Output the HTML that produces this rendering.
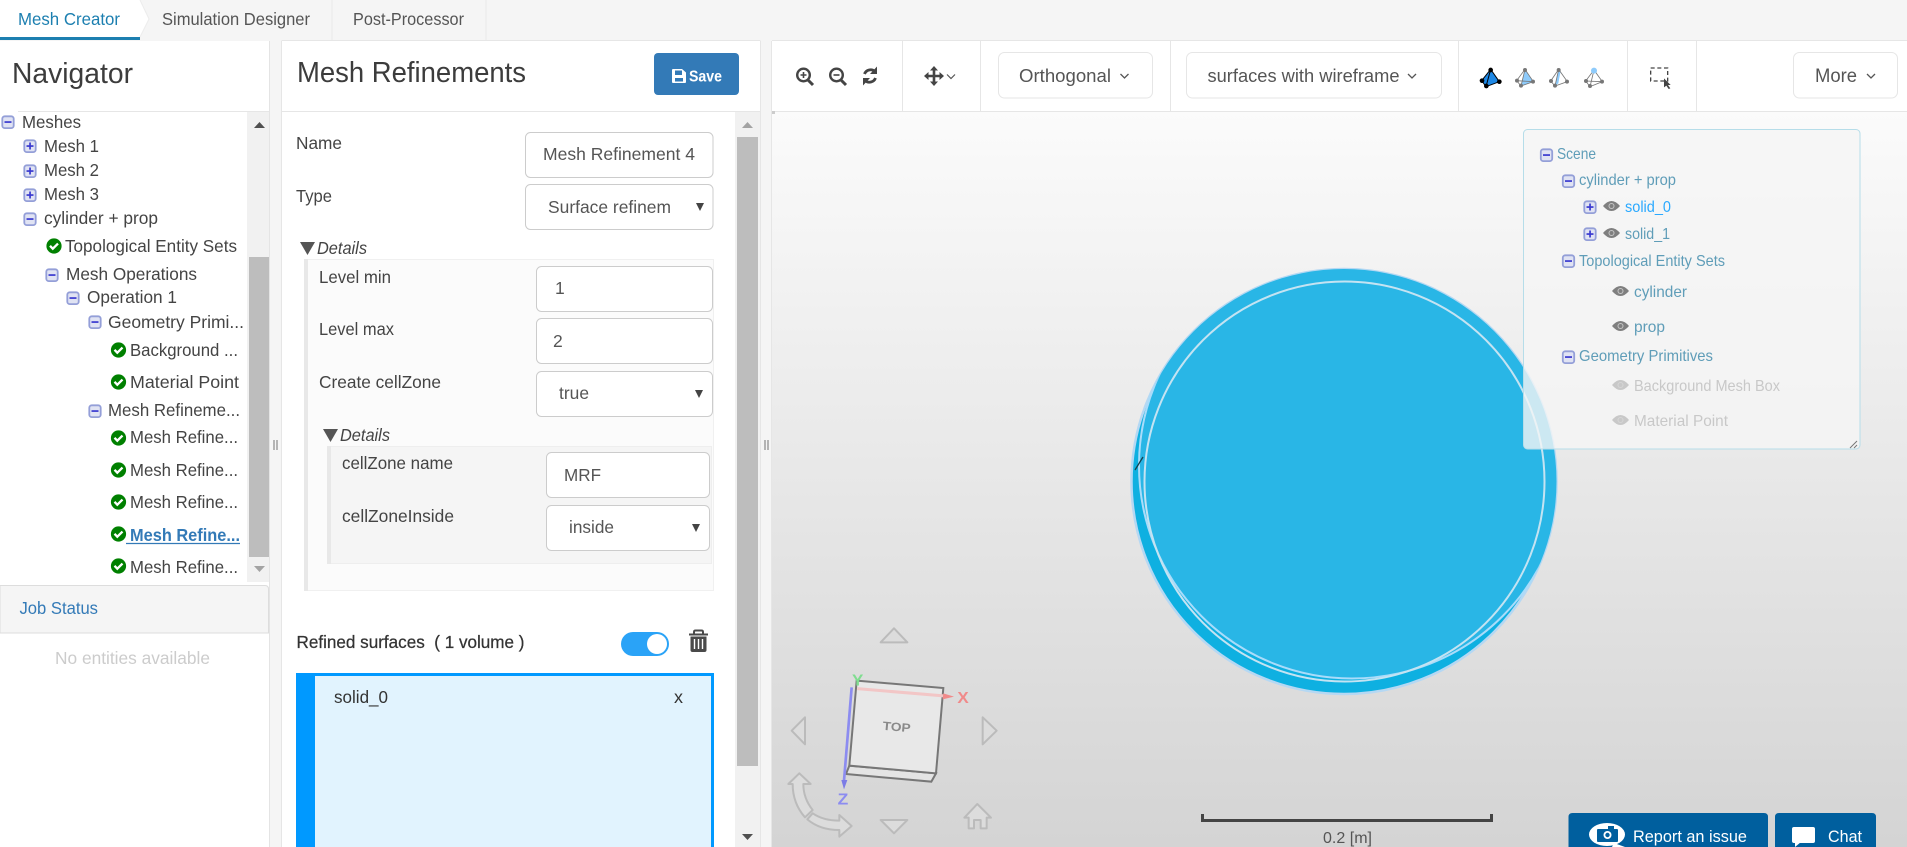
<!DOCTYPE html>
<html><head><meta charset="utf-8"><title>Mesh Creator</title>
<style>
html,body{margin:0;padding:0;width:1907px;height:847px;overflow:hidden;background:#f5f5f5}
svg{display:block;position:absolute;left:0;top:0}
text{font-family:"Liberation Sans",sans-serif;fill:#444;font-size:17.5px;white-space:pre}
.lb{font-size:17.5px;fill:#444}
.inp{font-size:17.5px;fill:#555}
.h{font-size:29px;fill:#3c3c3c}
.tb{font-size:18.5px;fill:#555}
.sc{font-size:16px;fill:#5f9db8}
.box{fill:#fff;stroke:#ccc;stroke-width:1}
.btn{fill:#fff;stroke:#e6e6e6;stroke-width:1}
.nav{fill:#dcdcdc;stroke:#bbb;stroke-width:6;stroke-linejoin:round}
</style></head><body>
<svg width="1907" height="847" viewBox="0 0 1907 847" xmlns="http://www.w3.org/2000/svg">
<defs>
<linearGradient id="vg" x1="0" y1="0" x2="0" y2="1"><stop offset="0" stop-color="#fbfbfb"/><stop offset="1" stop-color="#d4d4d4"/></linearGradient>
<clipPath id="oc"><circle cx="1344" cy="481.500" r="212.500"/></clipPath>
<g id="mi"><rect x="-5.7" y="-5.7" width="11.4" height="11.8" rx="2.5" fill="#e0e3f3" stroke="#949fd8" stroke-width="1.800"/><rect x="-3.5" y="-.8" width="7" height="1.7" fill="#3a3ad0"/></g>
<g id="pl"><rect x="-5.7" y="-5.7" width="11.4" height="11.8" rx="2.5" fill="#e0e3f3" stroke="#949fd8" stroke-width="1.800"/><rect x="-3.5" y="-.8" width="7" height="1.7" fill="#3a3ad0"/><rect x="-.8" y="-3.5" width="1.7" height="7" fill="#3a3ad0"/></g>
<g id="ck"><circle r="7.6" fill="#008000"/><path d="M-4-.2L-1.2 2.7L4-2.4" fill="none" stroke="#fff" stroke-width="2.3"/></g>
<g id="ey"><path d="M-8.500 0Q0-10 8.500 0Q0 10-8.500 0Z" fill="currentColor"/><circle r="3" fill="#d8d8d8" opacity=".8"/><circle r="2" fill="currentColor"/></g>
</defs>

<!-- tabs -->
<rect width="1907" height="847" fill="#f5f5f5"/>
<rect x="0" y="0" width="140" height="37" fill="#fff"/>
<rect x="0" y="37" width="140" height="3" fill="#1c7fb0"/>
<path d="M140 0L149 19L140 37" fill="#fff" stroke="#ececec"/>
<path d="M332 0V40M486 0V40" stroke="#e9e9e9" fill="none"/>
<text x="18" y="25" textLength="102" lengthAdjust="spacingAndGlyphs" style="fill:#1c7fb0">Mesh Creator</text>
<text x="162" y="25" textLength="148" lengthAdjust="spacingAndGlyphs" style="fill:#555">Simulation Designer</text>
<text x="353" y="25" textLength="111" lengthAdjust="spacingAndGlyphs" style="fill:#555">Post-Processor</text>

<!-- navigator -->
<rect x="0" y="41" width="269" height="806" fill="#fff"/>
<path d="M269.5 41V847" stroke="#e4e4e4"/>
<path d="M18 111.5H269" stroke="#e6e6e6"/>
<text x="12" y="83" class="h" textLength="121" lengthAdjust="spacingAndGlyphs">Navigator</text>
<rect x="247" y="112" width="22" height="470" fill="#f1f1f1"/>
<rect x="249" y="257" width="20" height="300" fill="#bdbdbd"/>
<path d="M254 128L259.500 122L265 128Z" fill="#505050"/>
<path d="M254 566H265L259.500 572Z" fill="#a3a3a3"/>

<use href="#mi" x="8" y="122"/><text x="22" y="128" textLength="59" lengthAdjust="spacingAndGlyphs">Meshes</text>
<use href="#pl" x="30" y="146"/><text x="44" y="152" textLength="55" lengthAdjust="spacingAndGlyphs">Mesh 1</text>
<use href="#pl" x="30" y="171"/><text x="44" y="176" textLength="55" lengthAdjust="spacingAndGlyphs">Mesh 2</text>
<use href="#pl" x="30" y="195"/><text x="44" y="200" textLength="55" lengthAdjust="spacingAndGlyphs">Mesh 3</text>
<use href="#mi" x="30" y="219"/><text x="44" y="224" textLength="114" lengthAdjust="spacingAndGlyphs">cylinder + prop</text>
<use href="#ck" x="54" y="246"/><text x="65" y="252" textLength="172" lengthAdjust="spacingAndGlyphs">Topological Entity Sets</text>
<use href="#mi" x="52" y="275"/><text x="66" y="280" textLength="131" lengthAdjust="spacingAndGlyphs">Mesh Operations</text>
<use href="#mi" x="73" y="298"/><text x="87" y="303" textLength="90" lengthAdjust="spacingAndGlyphs">Operation 1</text>
<use href="#mi" x="95" y="322"/><text x="108" y="328" textLength="136" lengthAdjust="spacingAndGlyphs">Geometry Primi...</text>
<use href="#ck" x="118.500" y="350"/><text x="130" y="356" textLength="108" lengthAdjust="spacingAndGlyphs">Background ...</text>
<use href="#ck" x="118.500" y="382"/><text x="130" y="388" textLength="109" lengthAdjust="spacingAndGlyphs">Material Point</text>
<use href="#mi" x="95" y="411"/><text x="108" y="416" textLength="132" lengthAdjust="spacingAndGlyphs">Mesh Refineme...</text>
<use href="#ck" x="118.500" y="438"/><text x="130" y="443" textLength="108" lengthAdjust="spacingAndGlyphs">Mesh Refine...</text>
<use href="#ck" x="118.500" y="470"/><text x="130" y="476" textLength="108" lengthAdjust="spacingAndGlyphs">Mesh Refine...</text>
<use href="#ck" x="118.500" y="502"/><text x="130" y="508" textLength="108" lengthAdjust="spacingAndGlyphs">Mesh Refine...</text>
<use href="#ck" x="118.500" y="534"/><text x="130" y="541" textLength="110" lengthAdjust="spacingAndGlyphs" style="fill:#337ab7;font-weight:bold">Mesh Refine...</text>
<path d="M126 543.500H240" stroke="#337ab7" stroke-width="1.200"/>
<use href="#ck" x="118.500" y="566"/><text x="130" y="573" textLength="108" lengthAdjust="spacingAndGlyphs">Mesh Refine...</text>

<!-- job status -->
<path d="M0 585.500H265Q268.500 585.500 268.500 589V633H0Z" fill="#f5f5f5" stroke="#ddd"/>
<text x="19.500" y="614" textLength="78.500" lengthAdjust="spacingAndGlyphs" style="fill:#337ab7">Job Status</text>
<text x="55" y="664" textLength="155" lengthAdjust="spacingAndGlyphs" style="fill:#ccc">No entities available</text>

<!-- gutter handles -->
<path d="M274 440V450M277 440V450" stroke="#888" stroke-width="1.200"/>
<path d="M765 440V450M768 440V450" stroke="#888" stroke-width="1.200"/>

<!-- mesh panel -->
<rect x="282" y="41" width="478" height="806" fill="#fff"/>
<path d="M281.500 41V847M760.500 41V847M281.500 40.500H760.500" stroke="#e6e6e6" fill="none"/>
<path d="M282 111.500H760" stroke="#e6e6e6"/>
<text x="297" y="82" class="h" textLength="229" lengthAdjust="spacingAndGlyphs">Mesh Refinements</text>
<rect x="654" y="53" width="85" height="42" rx="4" fill="#337ab7"/>
<path d="M672 76V70Q672 69 673 69H682L686 72.500V82Q686 83 685 83H673Q672 83 672 82Z M675 70.500V75H682V70.500Z M675 78V81.500H683V78Z" fill="#fff" fill-rule="evenodd"/>
<text x="689" y="81.500" textLength="33" lengthAdjust="spacingAndGlyphs" style="fill:#fff;font-size:16px;font-weight:bold">Save</text>

<rect x="735" y="112" width="25" height="735" fill="#f1f1f1"/>
<rect x="737" y="137" width="21" height="629" fill="#bdbdbd"/>
<path d="M742 128L747.500 122L753 128Z" fill="#a3a3a3"/>
<path d="M742 834H753L747.500 840Z" fill="#505050"/>

<text x="296" y="149" class="lb" textLength="46" lengthAdjust="spacingAndGlyphs">Name</text>
<rect x="525.500" y="132.500" width="187.500" height="45" rx="5" class="box"/>
<text x="543" y="160" class="inp" textLength="152" lengthAdjust="spacingAndGlyphs">Mesh Refinement 4</text>
<text x="296" y="202" class="lb" textLength="36" lengthAdjust="spacingAndGlyphs">Type</text>
<rect x="525.500" y="184.500" width="187.500" height="45" rx="5" class="box"/>
<text x="548" y="213" class="inp" textLength="123" lengthAdjust="spacingAndGlyphs">Surface refinem</text>
<path d="M696 203H704L700 211Z" fill="#444"/>

<path d="M300 242H315L307.500 255Z" fill="#555"/>
<text x="317" y="254" class="lb" font-style="italic" textLength="50" lengthAdjust="spacingAndGlyphs">Details</text>
<rect x="304.500" y="259.500" width="409" height="331" fill="#fbfbfb" stroke="#f0f0f0"/>
<rect x="304" y="259" width="4" height="332" fill="#e8e8e8"/>
<text x="319" y="283" class="lb" textLength="72" lengthAdjust="spacingAndGlyphs">Level min</text>
<rect x="536.500" y="266.500" width="176" height="45" rx="5" class="box"/>
<text x="555" y="294" class="inp">1</text>
<text x="319" y="335" class="lb" textLength="75" lengthAdjust="spacingAndGlyphs">Level max</text>
<rect x="536.500" y="318.500" width="176" height="45" rx="5" class="box"/>
<text x="553" y="347" class="inp">2</text>
<text x="319" y="388" class="lb" textLength="122" lengthAdjust="spacingAndGlyphs">Create cellZone</text>
<rect x="536.500" y="371.500" width="176" height="45" rx="5" class="box"/>
<text x="559" y="399" class="inp" textLength="30" lengthAdjust="spacingAndGlyphs">true</text>
<path d="M695 390H703L699 398Z" fill="#444"/>

<path d="M323 429H338L330.500 442Z" fill="#555"/>
<text x="340" y="441" class="lb" font-style="italic" textLength="50" lengthAdjust="spacingAndGlyphs">Details</text>
<rect x="327.500" y="446.500" width="384" height="117" fill="#f5f5f5" stroke="#eee"/>
<rect x="327" y="446" width="4" height="118" fill="#e8e8e8"/>
<text x="342" y="469" class="lb" textLength="111" lengthAdjust="spacingAndGlyphs">cellZone name</text>
<rect x="546.500" y="452.500" width="163" height="45" rx="5" class="box"/>
<text x="564" y="481" class="inp" textLength="37" lengthAdjust="spacingAndGlyphs">MRF</text>
<text x="342" y="522" class="lb" textLength="112" lengthAdjust="spacingAndGlyphs">cellZoneInside</text>
<rect x="546.500" y="505.500" width="163" height="45" rx="5" class="box"/>
<text x="569" y="533" class="inp" textLength="45" lengthAdjust="spacingAndGlyphs">inside</text>
<path d="M692 524H700L696 532Z" fill="#444"/>

<text x="296.500" y="648" textLength="228" lengthAdjust="spacingAndGlyphs" style="fill:#333;stroke:#333;stroke-width:.25">Refined surfaces  ( 1 volume )</text>
<rect x="621" y="632" width="48" height="24" rx="12" fill="#2aa3f7"/>
<circle cx="657" cy="644" r="10" fill="#fff"/>
<path d="M689 634.500H708M694 634.500V632Q694 630.500 695.500 630.500H701.500Q703 630.500 703 632V634.500" fill="none" stroke="#4a4a4a" stroke-width="2"/>
<path d="M690.500 636.500H706.500V650Q706.500 652 704.500 652H692.500Q690.500 652 690.500 650Z" fill="#4a4a4a"/>
<path d="M694.500 639V649M698.500 639V649M702.500 639V649" stroke="#fff" stroke-width="1.400"/>

<rect x="296" y="673" width="418" height="174" fill="#0099ff"/>
<rect x="315" y="676" width="396" height="171" fill="#e1f3fe"/>
<text x="334" y="703" textLength="54" lengthAdjust="spacingAndGlyphs" style="fill:#333">solid_0</text>
<text x="674" y="703" textLength="9" lengthAdjust="spacingAndGlyphs" style="fill:#333">x</text>

<!-- viewer -->
<rect x="772" y="111" width="1135" height="736" fill="url(#vg)"/>
<rect x="772" y="41" width="1135" height="70" fill="#fff"/>
<path d="M771.500 41V847" stroke="#e6e6e6"/>
<path d="M772 40.500H1907M772 111.500H1907" stroke="#e6e6e6"/>
<path d="M902.500 41V111M980.500 41V111M1170.500 41V111M1458.500 41V111M1627.500 41V111M1696.500 41V111" stroke="#e6e6e6"/>
<rect x="772" y="111" width="3" height="3" fill="#ccc"/>

<!-- zoom icons -->
<g fill="none" stroke="#444" stroke-width="2.400">
<circle cx="803.500" cy="75" r="6.300"/><path d="M808 80L813 85" stroke-width="3"/><path d="M800.500 75H806.500M803.500 72V78" stroke-width="1.600"/>
<circle cx="836.500" cy="75" r="6.300"/><path d="M841 80L846 85" stroke-width="3"/><path d="M833.500 75H839.500" stroke-width="1.600"/>
<path d="M864.500 74A6.500 6.500 0 0 1 875 71.500" stroke-width="2.800"/><path d="M875.500 78A6.500 6.500 0 0 1 865 80.500" stroke-width="2.800"/>
</g>
<path d="M877 66.500V74H870ZM863 85.500V78H870Z" fill="#444"/>
<!-- move -->
<path d="M934 66L938 70.500H935.300V74.700H939.500V72L944 76L939.500 80V77.300H935.300V81.500H938L934 86L930 81.500H932.700V77.300H928.500V80L924 76L928.500 72V74.700H932.700V70.500H930Z" fill="#444"/>
<path d="M947 74.500L951 78.500L955 74.500" fill="none" stroke="#555" stroke-width="1.200"/>

<rect x="998.500" y="52.500" width="154" height="45.500" rx="6" class="btn"/>
<text x="1019" y="82" class="tb" textLength="92" lengthAdjust="spacingAndGlyphs">Orthogonal</text>
<path d="M1120.500 74L1124.500 78L1128.500 74" fill="none" stroke="#555" stroke-width="1.300"/>
<rect x="1186.500" y="52.500" width="255" height="45.500" rx="6" class="btn"/>
<text x="1207.500" y="82" class="tb" textLength="192" lengthAdjust="spacingAndGlyphs">surfaces with wireframe</text>
<path d="M1408 74L1412 78L1416 74" fill="none" stroke="#555" stroke-width="1.300"/>

<!-- tetra icons -->
<g transform="translate(1440 30) scale(.33333)">
<path d="M152 118L125 152L138 170L178 155Z" fill="#1e88e5" stroke="#000" stroke-width="3"/><path d="M152 118L138 170" stroke="#000" stroke-width="3"/>
<g fill="#000"><circle cx="152" cy="120" r="7"/><circle cx="126" cy="152" r="7"/><circle cx="178" cy="155" r="7"/><circle cx="139" cy="168" r="7"/></g>
<path d="M255 118L243 168L280 155Z" fill="#8ecbfb"/>
<path d="M255 118L230 152L243 168L280 155ZM255 118L243 168M230 152L280 155" fill="none" stroke="#777" stroke-width="2.500"/>
<g fill="#777"><circle cx="255" cy="120" r="6"/><circle cx="231" cy="152" r="6"/><circle cx="279" cy="155" r="6"/><circle cx="243" cy="167" r="6"/></g>
<path d="M356 118L345 168L355 160L362 122Z" fill="#8ecbfb"/>
<path d="M356 118L332 153L345 168L382 155ZM356 118L345 168M356 118L382 155" fill="none" stroke="#777" stroke-width="2.500"/>
<g fill="#777"><circle cx="356" cy="120" r="6"/><circle cx="333" cy="153" r="6"/><circle cx="381" cy="155" r="6"/><circle cx="345" cy="167" r="6"/></g>
<path d="M462 120L437 153L450 170L487 155ZM462 120L450 170M437 153L487 155" fill="none" stroke="#777" stroke-width="2.500"/>
<g fill="#777"><circle cx="438" cy="153" r="6"/><circle cx="486" cy="155" r="6"/><circle cx="450" cy="168" r="6"/></g><circle cx="462" cy="122" r="9" fill="#8ecbfb"/>
<rect x="632" y="114" width="51" height="39" fill="none" stroke="#444" stroke-width="4" stroke-dasharray="12 8"/>
<path d="M672 145L692 165L684 165L691 175L686 177L679 167L672 172Z" fill="#444"/>
</g>

<rect x="1793.500" y="52.500" width="104" height="45.500" rx="6" class="btn"/>
<text x="1815" y="82" style="font-size:19px;fill:#555" textLength="42" lengthAdjust="spacingAndGlyphs">More</text>
<path d="M1867 74L1871 78L1875 74" fill="none" stroke="#555" stroke-width="1.300"/>

<!-- disk -->
<circle cx="1344" cy="481.500" r="212.500" fill="#0eb0e1" stroke="#b5d8f3" stroke-width="2.500"/>
<g clip-path="url(#oc)"><circle cx="1352" cy="465.500" r="213" fill="#29b6e6" stroke="#a9dcfa" stroke-width="2"/></g>
<circle cx="1344.500" cy="481.500" r="200" fill="none" stroke="#c4e3f2" stroke-width="2"/>
<path d="M1135 470L1143 457" stroke="#16414f" stroke-width="1.300"/>

<!-- nav cube -->
<g transform="translate(770 610) scale(.33333)">
<path d="M372 55L412 97H332Z" class="nav"/>
<path d="M105 322V403L65 362Z" class="nav"/>
<path d="M638 322V403L680 362Z" class="nav"/>
<path d="M332 630H412L372 670Z" class="nav"/>
<path d="M88 490L122 522H100Q100 565 128 600L105 622Q68 580 68 522H55Z" class="nav"/>
<path d="M128 610Q160 632 208 632V615L245 648L208 680V660Q150 660 112 628Z" class="nav"/>
<path d="M622 582L663 623H650V655H632V630H612V655H596V623H583Z" class="nav"/>
<path d="M238 467L498 490L484 515L228 492Z" fill="#e4e4e4" stroke="#777" stroke-width="6"/>
<path d="M260 212L520 234L498 490L238 467Z" fill="#e8e8e8" stroke="#777" stroke-width="6"/>
<path d="M262 236L525 258" stroke="#f2c6c6" stroke-width="9"/>
<path d="M520 250L552 260L518 268Z" fill="#f08a8a"/>
<path d="M245 232L222 512" stroke="#8c8cf0" stroke-width="8"/>
<path d="M214 510H232L222 538Z" fill="#7c7ce6"/>
<text x="338" y="363" transform="rotate(5 380 350)" style="font-size:36px;font-weight:bold;fill:#8a8a8a" textLength="84" lengthAdjust="spacingAndGlyphs">TOP</text>
<text x="562" y="279" style="font-size:48px;font-weight:bold;fill:#f08a8a" textLength="34" lengthAdjust="spacingAndGlyphs">X</text>
<text x="246" y="226" style="font-size:48px;font-weight:bold;fill:#80dd90" textLength="34" lengthAdjust="spacingAndGlyphs">Y</text>
<text x="203" y="584" style="font-size:48px;font-weight:bold;fill:#8c8cf0" textLength="32" lengthAdjust="spacingAndGlyphs">Z</text>
</g>

<!-- scene panel -->
<rect x="1523.500" y="129.500" width="336.500" height="319.500" rx="4" fill="rgba(245,245,245,.8)" stroke="#b6dde9"/>
<path d="M1857 441L1850 448M1857 445L1854 448" stroke="#777" stroke-width="1"/>
<use href="#mi" x="1546.500" y="155"/><text x="1557" y="159" class="sc" textLength="39" lengthAdjust="spacingAndGlyphs">Scene</text>
<use href="#mi" x="1568.500" y="181"/><text x="1579" y="185" class="sc" textLength="97" lengthAdjust="spacingAndGlyphs">cylinder + prop</text>
<use href="#pl" x="1590" y="207"/><use href="#ey" x="1611.500" y="206" color="#7f7f7f"/><text x="1625" y="212" class="sc" textLength="46" lengthAdjust="spacingAndGlyphs" style="fill:#2aa9ff">solid_0</text>
<use href="#pl" x="1590" y="234"/><use href="#ey" x="1611.500" y="233" color="#7f7f7f"/><text x="1625" y="239" class="sc" textLength="45" lengthAdjust="spacingAndGlyphs">solid_1</text>
<use href="#mi" x="1568.500" y="261"/><text x="1579" y="266" class="sc" textLength="146" lengthAdjust="spacingAndGlyphs">Topological Entity Sets</text>
<use href="#ey" x="1620.500" y="291" color="#7f7f7f"/><text x="1634" y="297" class="sc" textLength="53" lengthAdjust="spacingAndGlyphs">cylinder</text>
<use href="#ey" x="1620.500" y="326" color="#7f7f7f"/><text x="1634" y="332" class="sc" textLength="31" lengthAdjust="spacingAndGlyphs">prop</text>
<use href="#mi" x="1568.500" y="357"/><text x="1579" y="361" class="sc" textLength="134" lengthAdjust="spacingAndGlyphs">Geometry Primitives</text>
<use href="#ey" x="1620.500" y="385" color="#c8c8c8"/><text x="1634" y="391" class="sc" textLength="146" lengthAdjust="spacingAndGlyphs" style="fill:#c8c8c8">Background Mesh Box</text>
<use href="#ey" x="1620.500" y="420" color="#c8c8c8"/><text x="1634" y="426" class="sc" textLength="94" lengthAdjust="spacingAndGlyphs" style="fill:#c8c8c8">Material Point</text>

<!-- scale bar -->
<path d="M1202.500 814V820.500H1491.500V814" fill="none" stroke="#444" stroke-width="3"/>
<text x="1323" y="843" textLength="49" lengthAdjust="spacingAndGlyphs" style="font-size:16px;fill:#555">0.2 [m]</text>

<!-- feedback buttons -->
<path d="M1568.500 847V817Q1568.500 813 1572.500 813H1764Q1768 813 1768 817V847Z" fill="#005f9e"/>
<path d="M1775 847V817Q1775 813 1779 813H1872Q1876 813 1876 817V847Z" fill="#005f9e"/>
<ellipse cx="1607" cy="834.500" rx="18" ry="11.500" fill="#fff"/>
<path d="M1614 843L1625 847H1612Z" fill="#fff"/>
<rect x="1597" y="829" width="21" height="13" rx="1" fill="#005f9e"/><rect x="1608" y="826" width="6" height="4" fill="#005f9e"/>
<circle cx="1607.500" cy="835" r="4" fill="#fff"/><circle cx="1607.500" cy="835" r="2.200" fill="#005f9e"/>
<rect x="1792" y="827" width="23" height="16" rx="2" fill="#fff"/><path d="M1795 842V847L1801 842Z" fill="#fff"/>
<text x="1633" y="842" textLength="114" lengthAdjust="spacingAndGlyphs" style="fill:#fff;font-size:17px">Report an issue</text>
<text x="1828" y="842" textLength="34" lengthAdjust="spacingAndGlyphs" style="fill:#fff;font-size:17px">Chat</text>
</svg>
</body></html>
